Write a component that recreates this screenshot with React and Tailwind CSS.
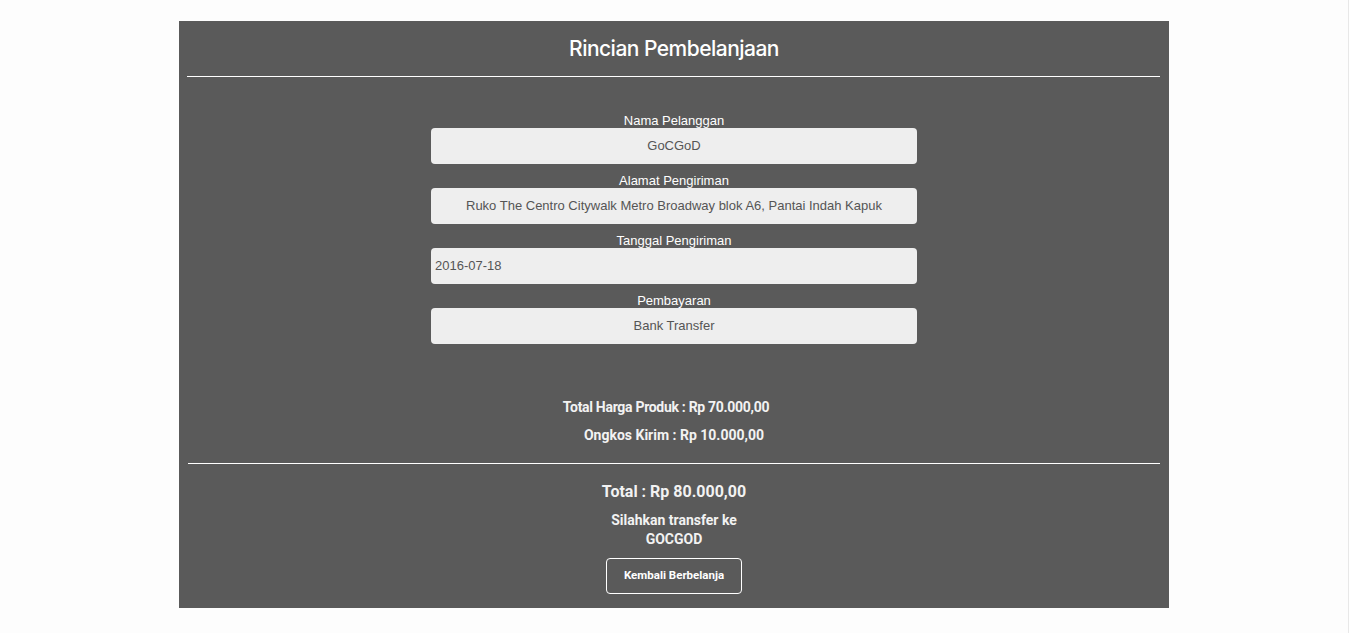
export default function App() {
  const fields = [
    { label: 'Nama Pelanggan', value: 'GoCGoD', center: true },
    { label: 'Alamat Pengiriman', value: 'Ruko The Centro Citywalk Metro Broadway blok A6, Pantai Indah Kapuk', center: true },
    { label: 'Tanggal Pengiriman', value: '2016-07-18', center: false },
    { label: 'Pembayaran', value: 'Bank Transfer', center: true },
  ];

  return (
    <div className="min-h-screen bg-[#fdfdfd] flex" style={{ fontFamily: '"Liberation Sans", Arial, sans-serif' }}>
      <div className="flex-1 pt-[21px]">
        <div className="w-[990px] mx-auto bg-[#5a5a5a] text-white pb-[14px]">
          {/* Header */}
          <div className="h-[55px] flex items-center justify-center">
            <h2 className="text-[21px] font-medium tracking-tight" style={{ fontFamily: 'Inter, "Noto Sans", sans-serif' }}>
              Rincian Pembelanjaan
            </h2>
          </div>
          <div className="ml-[8px] mr-[9px] h-px bg-white"></div>

          {/* Form */}
          <div className="w-[486px] mx-auto pt-[36px] flex flex-col gap-[9px]">
            {fields.map((f) => (
              <div key={f.label} className="flex flex-col">
                <label className="text-[13px] leading-[15px] text-center text-white">{f.label}</label>
                <div
                  className={`h-[36px] bg-[#eeeeee] rounded-[4px] flex items-center text-[13px] text-[#555555] ${f.center ? 'justify-center' : 'justify-start pl-[4px]'}`}
                >
                  {f.value}
                </div>
              </div>
            ))}
          </div>

          {/* Subtotals */}
          <div className="pt-[53px] flex flex-col items-center font-bold text-[14px] text-[#f2f2f2]" style={{ fontFamily: 'Roboto, "Liberation Sans", sans-serif' }}>
            <p className="leading-[20px] tracking-[-0.3px] pr-[16px]">Total Harga Produk : Rp 70.000,00</p>
            <p className="leading-[20px] mt-[8px]">Ongkos Kirim : Rp 10.000,00</p>
          </div>
          <div className="ml-[9px] mr-[9px] h-px bg-white mt-[18px]"></div>

          {/* Total */}
          <div className="flex flex-col items-center font-bold text-[#f2f2f2]" style={{ fontFamily: 'Roboto, "Liberation Sans", sans-serif' }}>
            <p className="text-[16px] leading-[22px] mt-[17px]">Total : Rp 80.000,00</p>
            <p className="text-[14px] leading-[19px] mt-[8px] text-center">
              Silahkan transfer ke
              <br />
              GOCGOD
            </p>
            <button className="mt-[9px] w-[136px] h-[36px] border border-white rounded-[4px] text-[11.5px] font-bold text-white">
              Kembali Berbelanja
            </button>
          </div>
        </div>
      </div>
      <div className="w-px bg-[#e8e8e8]"></div>
    </div>
  );
}
